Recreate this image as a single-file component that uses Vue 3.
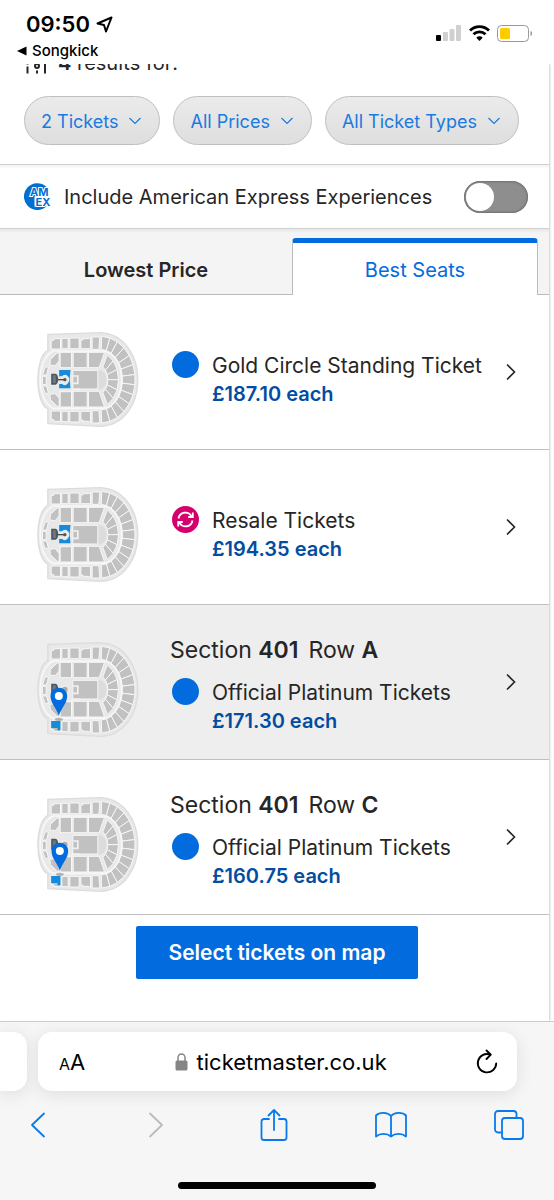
<template>
  <div class="phone">
    <header class="status">
      <div>
        <div class="status__time">
          <span>09:50</span>
          <svg width="17" height="17" viewBox="0 0 17 17" aria-hidden="true">
            <path d="M15.500 1.500 10 15.500 8 9 1.500 7.500Z" fill="none" stroke="#000" stroke-width="2" stroke-linejoin="round" />
          </svg>
        </div>
        <a class="status__back" href="#">
          <svg width="10" height="10" viewBox="0 0 10 10" aria-hidden="true">
            <path d="M0 5 9.500 0.500v9z" />
          </svg>
          Songkick
        </a>
      </div>
      <div class="status__icons">
        <svg width="26" height="16" viewBox="0 0 26 16" aria-hidden="true">
          <rect x="0" y="10" width="5" height="6" rx="1" />
          <g fill="#d0d0d0">
            <rect x="7" y="7" width="5" height="9" rx="1" />
            <rect x="13.500" y="4" width="5" height="12" rx="1" />
            <rect x="20" y="0" width="5" height="16" rx="1" />
          </g>
        </svg>
        <svg width="21" height="16" viewBox="0 0 21 16" aria-hidden="true">
          <path d="M1 5.500a13.500 13.500 0 0 1 19 0M4.500 9.300a8.500 8.500 0 0 1 12 0" fill="none" stroke="#000" stroke-width="2.800" />
          <path d="M10.500 16 7.300 12.700a4.500 4.500 0 0 1 6.400 0z" />
        </svg>
        <svg width="36" height="17" viewBox="0 0 36 17" aria-hidden="true">
          <rect x="0.500" y="0.500" width="31" height="16" rx="4" fill="#fff" stroke="#999" />
          <rect x="3" y="3" width="10" height="11" rx="1.500" fill="#fc0" />
          <path d="M33.500 6c2.200.6 2.200 4.400 0 5z" fill="#999" />
        </svg>
      </div>
    </header>

    <main class="page">
      <section class="filters">
        <div class="filters__summary">
          <svg width="24" height="24" viewBox="0 0 24 24" aria-hidden="true">
            <g fill="none" stroke="#262626" stroke-width="2">
              <path d="M2.500 0v14.500M2.500 16.500v7M12 0v13M12 20.500v3M20 0v12M20 14v9.500" />
              <circle cx="12" cy="16" r="2" />
            </g>
          </svg>
          <span><b>4</b> results for:</span>
        </div>
        <div class="filters__pills">
          <button v-for="label in filters" :key="label" class="pill" type="button">
            {{ label }}
            <svg width="12" height="8" viewBox="0 0 12 8" aria-hidden="true">
              <path d="M0.500 1 6 6.500 11.500 1" fill="none" stroke="currentColor" stroke-width="1.200" />
            </svg>
          </button>
        </div>
      </section>

      <section class="amex">
        <svg width="27" height="27" viewBox="0 0 27 27" aria-hidden="true">
          <path d="M22 3.500A13.300 13.300 0 1 0 22 23.500V12z" fill="#016fd0" />
          <path d="M10.500 13.500h13v11h-13z" fill="#fff" />
          <path d="M10.500 22.800h12.500A13.300 13.300 0 0 1 10.500 26.500z" fill="#016fd0" />
          <text x="6" y="12.500" class="amex__logo">AM</text>
          <text x="11.500" y="22.500" class="amex__logo">EX</text>
        </svg>
        <label class="amex__label" for="amex">Include American Express Experiences</label>
        <input id="amex" v-model="includeAmex" class="switch" type="checkbox" role="switch" />
      </section>

      <div class="tabs" role="tablist">
        <button
          v-for="tab in tabs"
          :key="tab"
          class="tab"
          :class="{ 'tab--active': tab === activeTab }"
          type="button"
          role="tab"
          :aria-selected="tab === activeTab"
          @click="activeTab = tab"
        >
          {{ tab }}
        </button>
      </div>

      <ul class="tickets">
        <li v-for="ticket in tickets" :key="ticket.id">
          <button class="ticket" :class="{ 'ticket--active': ticket.id === 3 }" type="button">
            <svg class="ticket__map" viewBox="50 35 305 285" aria-hidden="true">
              <path :d="outline" fill="#e8e8e8" stroke="#dcdcdc" stroke-width="4" />
              <path d="M98 92H248C322 100 322 256 248 264H98C46 240 46 116 98 92Z" fill="none" stroke="#f8f8f8" stroke-width="5" />
              <g fill="#c1c1c1" stroke="#f7f7f7" stroke-width="3">
                <path v-for="d in blocks" :key="d" :d="d" />
                <path v-for="d in wedges" :key="d" :d="d" />
              </g>
              <path d="M234 148Q258 152 258 178T234 208Z" fill="#dcdcdc" />
              <path d="M158 167h14v22h-14M115 213h40v-6h24" fill="none" stroke="#f2f2f2" stroke-width="5" />
              <path d="M92 160h13q8 2 8 17t-8 16H92z" fill="#4a5866" />
              <path d="M97 165h9v23h-9z" fill="#73777b" />
              <template v-if="!ticket.pin">
                <path d="M116 149h34q-5 28 0 55h-34v-13h9q9 9 17-2 7-12-1-22-8-8-16 1h-9z" fill="#168bdc" />
                <circle cx="133" cy="178" r="11" fill="none" stroke="#e6edf2" stroke-width="5" />
                <path d="M112 178h21" stroke="#4c4c4c" stroke-width="4" />
                <circle cx="133" cy="178" r="5" fill="#555" />
              </template>
              <template v-else>
                <circle cx="133" cy="178" r="11" fill="#aaa" stroke="#eee" stroke-width="5" />
                <path d="M92 272h28v28h-9v-7H92z" fill="#168bdc" />
                <ellipse :cx="ticket.pin" cy="267" rx="12" ry="5" fill="#888" opacity="0.6" />
                <path :d="pinPath(ticket.pin)" fill="#026cdf" />
                <circle :cx="ticket.pin" cy="197" r="12" fill="#fff" />
              </template>
            </svg>
            <span class="ticket__info" :class="{ 'ticket__info--seated': ticket.row }">
              <span v-if="ticket.row" class="ticket__seat">
                <span>Section <b>{{ ticket.section }}</b></span>
                <span>Row <b>{{ ticket.row }}</b></span>
              </span>
              <span class="ticket__offer">
                <svg width="27" height="27" viewBox="0 0 27 27" aria-hidden="true">
                  <circle cx="13.500" cy="13.500" r="13.500" :fill="ticket.resale ? '#d6006d' : '#026cdf'" />
                  <g v-if="ticket.resale" fill="none" stroke="#fff" stroke-width="1.800">
                    <path d="M6.500 12.500C7.500 6 16 4.500 19.500 10M20.500 14.500C19.500 21 11 22.500 7.500 17" />
                    <path d="M20.800 6.500V11h-4.600M6.200 20.500V16h4.600" />
                  </g>
                </svg>
                <span>
                  <span class="ticket__name">{{ ticket.name }}</span>
                  <span class="ticket__price">{{ ticket.price }} each</span>
                </span>
              </span>
            </span>
            <svg class="ticket__arrow" width="10" height="18" viewBox="0 0 10 18" aria-hidden="true">
              <path d="M1 1.500 8.500 9 1 16.500" fill="none" stroke="#262626" stroke-width="1.600" />
            </svg>
          </button>
        </li>
      </ul>

      <div class="action">
        <button class="action__button" type="button">Select tickets on map</button>
      </div>
    </main>

    <footer class="browser">
      <div class="browser__bars">
        <div class="browser__previous"></div>
        <div class="address">
          <button class="address__size" type="button" aria-label="Page settings"><small>A</small>A</button>
          <button class="address__url" type="button">
            <svg width="13" height="18" viewBox="0 0 13 18" aria-hidden="true">
              <path d="M3 8V4.500a3.500 3.500 0 0 1 7 0V8" fill="none" stroke="#858587" stroke-width="1.500" />
              <rect x="0.500" y="7.500" width="12" height="10" rx="1.500" fill="#858587" />
            </svg>
            ticketmaster.co.uk
          </button>
          <button type="button" aria-label="Reload">
            <svg width="22" height="26" viewBox="0 0 22 26" aria-hidden="true">
              <g fill="none" stroke="#000" stroke-width="1.900" stroke-linecap="round" stroke-linejoin="round">
                <path d="M14 5.500A9.200 9.200 0 1 0 20.200 14.500" />
                <path d="M10.500 1.500 14.800 5.700 10.500 10" />
              </g>
            </svg>
          </button>
        </div>
      </div>
      <nav class="toolbar">
        <button type="button" aria-label="Back">
          <svg width="16" height="26" viewBox="0 0 16 26"><path d="M14 1.500 2 13l12 11.500" /></svg>
        </button>
        <button type="button" aria-label="Forward" disabled>
          <svg width="16" height="26" viewBox="0 0 16 26"><path d="M2 1.500 14 13 2 24.500" /></svg>
        </button>
        <button type="button" aria-label="Share">
          <svg width="28" height="34" viewBox="0 0 28 34">
            <path d="M9 11H4a2.500 2.500 0 0 0-2.500 2.500v16A2.500 2.500 0 0 0 4 32h20a2.500 2.500 0 0 0 2.500-2.500v-16A2.500 2.500 0 0 0 24 11h-5M14 22V2M8.500 7.500 14 2l5.500 5.500" />
          </svg>
        </button>
        <button type="button" aria-label="Bookmarks">
          <svg width="34" height="28" viewBox="0 0 34 28">
            <path d="M17 5C13.500 1 5.500 1 2 4.500v21c4-3.500 11-3.500 15 0 4-3.500 11-3.500 15 0v-21C28.500 1 20.500 1 17 5zM17 5v20.500" />
          </svg>
        </button>
        <button type="button" aria-label="Tabs">
          <svg width="32" height="32" viewBox="0 0 32 32">
            <path d="M8 23.500H5A3 3 0 0 1 2 20.500V5a3 3 0 0 1 3-3h15.500a3 3 0 0 1 3 3v3.500" />
            <rect x="9" y="9" width="21" height="21" rx="3" />
          </svg>
        </button>
      </nav>
      <div class="home"></div>
    </footer>
  </div>
</template>

<script setup>
import { ref } from 'vue';

const filters = ['2 Tickets', 'All Prices', 'All Ticket Types'];
const tabs = ['Lowest Price', 'Best Seats'];
const activeTab = ref('Best Seats');
const includeAmex = ref(false);

const tickets = [
  { id: 1, name: 'Gold Circle Standing Ticket', price: '£187.10' },
  { id: 2, name: 'Resale Tickets', price: '£194.35', resale: true },
  { id: 3, name: 'Official Platinum Tickets', price: '£171.30', section: '401', row: 'A', pin: 115 },
  { id: 4, name: 'Official Platinum Tickets', price: '£160.75', section: '401', row: 'C', pin: 118 },
];

const outline =
  'M82 42 240 37C310 40 352 105 352 178S310 316 240 318L82 310V266C42 246 42 110 82 90Z';

// straight seating blocks and the floor
const blocks = [
  'M92 60h8v-5h20v31H92z',
  'M124 54h19v31h-19z',
  'M148 53h28v32h-28z',
  'M181 59h6v-4h18v-2h5v32h-29z',
  'M215 50h23l-3 37h-20z',
  'M92 298h8v5h20v-31H92z',
  'M124 304h19v-31h-19z',
  'M148 305h28v-32h-28z',
  'M181 299h6v4h18v2h5v-32h-29z',
  'M215 308h23l-3-37h-20z',
  'M119 96h34v46h-34z',
  'M158 96h42v46h-42z',
  'M204 96h48l-16 46h-32z',
  'M119 213h34v47h-34z',
  'M158 213h42v47h-42z',
  'M204 213h32l16 47h-48z',
  'M157 150h75v56h-75z',
  'M90 117 110 98h6v24l-12 14-16-2z',
  'M90 238 110 258h6v-24l-12-14-16 2z',
  'M74 140h10l-6 24H66z',
  'M66 168h11v25H66z',
  'M66 197h12l6 22H74z',
];

// one slice of a ring of seats, angles in degrees
const slice = (cx, inner, outer, from, to) => {
  const point = ([rx, ry], angle) => {
    const rad = (angle * Math.PI) / 180;
    return `${(cx + rx * Math.cos(rad)).toFixed(1)} ${(178 + ry * Math.sin(rad)).toFixed(1)}`;
  };
  return `M${point(inner, from)}L${point(outer, from)} ${point(outer, to)} ${point(inner, to)}Z`;
};

const ring = (cx, inner, outer, start, count) => {
  const step = (-2 * start) / count;
  return Array.from({ length: count }, (_, i) =>
    slice(cx, inner, outer, start + i * step, start + (i + 1) * step),
  );
};

const wedges = [
  ...ring(240, [66, 91], [104, 130], -88, 13),
  ...ring(236, [26, 42], [58, 82], -65, 6),
];

const pinPath = (x) => `M${x} 256C${x - 8} 232 ${x - 25} 218 ${x - 25} 197a25 25 0 0 1 50 0C${x + 25} 218 ${x + 8} 232 ${x} 256Z`;
</script>

<style>
body {
  margin: 0;
}
</style>

<style scoped>
.phone {
  display: flex;
  flex-direction: column;
  min-height: 100vh;
  background-color: #fff;
  color: #262626;
  font-family: Inter, sans-serif;
  font-size: 20px;
}

button {
  border: 0;
  padding: 0;
  background: none;
  color: inherit;
  font: inherit;
}

svg {
  display: block;
  flex: none;
}

b {
  font-weight: 600;
}

.status {
  display: flex;
  justify-content: space-between;
  box-sizing: border-box;
  height: 64px;
  padding: 10px 21px 0 26px;
  color: #000;
}

.status__time {
  display: flex;
  align-items: center;
  gap: 6px;
  font-size: 22px;
  font-weight: 600;
  line-height: 28px;
}

.status__back {
  display: flex;
  align-items: center;
  gap: 5px;
  margin-left: -9px;
  color: #000;
  font-size: 15px;
  font-weight: 500;
  line-height: 26px;
  text-decoration: none;
}

.status__icons {
  display: flex;
  align-items: center;
  gap: 7px;
  height: 46px;
}

.page {
  margin-right: 5px;
  box-shadow: 1px 0 2px #ccc;
  clip-path: inset(0 -5px 0 0);
}

.filters {
  padding-bottom: 19px;
  border-bottom: 1px solid #d0d0d0;
}

/* the summary line has scrolled under the status bar */
.filters__summary {
  display: flex;
  align-items: flex-end;
  gap: 9px;
  overflow: hidden;
  height: 10px;
  padding-left: 25px;
  line-height: 22px;
}

.filters__pills {
  display: flex;
  gap: 13px;
  padding: 22px 24px 0;
}

.pill {
  display: flex;
  align-items: center;
  gap: 11px;
  height: 49px;
  padding: 1px 18px 0 16px;
  border: 1px solid #bfbfbf;
  border-radius: 25px;
  background: linear-gradient(#ebebeb, #dedede);
  color: #1a7ae0;
  font-size: 18px;
  white-space: nowrap;
}

.amex {
  display: flex;
  align-items: center;
  height: 63px;
  padding: 0 21px 0 24px;
  border-bottom: 1px solid #d0d0d0;
  background: linear-gradient(#f2f2f2, #fff 4px);
}

.amex__logo {
  fill: #016fd0;
  stroke: #fff;
  stroke-width: 2px;
  paint-order: stroke;
  font-size: 11px;
  font-weight: 700;
}

.amex__label {
  flex: 1;
  margin-left: 13px;
}

.switch {
  appearance: none;
  box-sizing: border-box;
  width: 64px;
  height: 32px;
  margin: 0;
  padding: 2px;
  border-radius: 16px;
  background-color: #8e8e8e;
  box-shadow: inset 0 0 2px 1px #707070;
}

.switch::before {
  content: '';
  display: block;
  width: 28px;
  height: 28px;
  border-radius: 50%;
  background-color: #fff;
}

.switch:checked::before {
  margin-left: auto;
}

.tabs {
  display: grid;
  grid-template-columns: 292fr 246fr;
  padding: 9px 11px 0 0;
  background:
    linear-gradient(#bbb, #bbb) bottom / 100% 1px no-repeat,
    linear-gradient(#e6e6e6, #f4f4f4 4px);
}

.tab {
  height: 57px;
  padding-top: 6px;
  font-weight: 600;
}

.tab--active {
  border: 1px solid #bbb;
  border-width: 0 1px;
  border-top: 5px solid #026cdf;
  border-radius: 4px 4px 0 0;
  padding-top: 1px;
  background-color: #fff;
  color: #026cdf;
  font-weight: 400;
}

.tickets {
  margin: 0;
  padding: 0;
  list-style: none;
}

.ticket {
  display: flex;
  align-items: center;
  box-sizing: border-box;
  width: 100%;
  height: 155px;
  padding: 0 33px 0 37px;
  border-bottom: 1px solid #bfbfbf;
  text-align: left;
}

.ticket--active {
  background-color: #eee;
}

.ticket__map {
  width: 102px;
  height: 95px;
  margin-top: 15px;
}

.ticket__info {
  flex: 1;
  margin-top: 15px;
  margin-left: 31px;
}

.ticket__info--seated {
  margin-top: 7px;
}

.ticket__seat {
  display: flex;
  gap: 10px;
  margin-bottom: 14px;
  font-size: 23px;
  line-height: 28px;
}

.ticket__offer {
  display: flex;
  gap: 13px;
  padding-left: 2px;
  line-height: 29px;
}

.ticket__name,
.ticket__price {
  display: block;
  white-space: nowrap;
}

.ticket__name {
  font-size: 21px;
}

.ticket__price {
  color: #024da1;
  font-weight: 600;
}

.action {
  display: flex;
  justify-content: center;
  padding: 11px 0 42px 5px;
}

.action__button {
  padding: 0 32px;
  border-radius: 2px;
  background-color: #026cdf;
  color: #fff;
  font-size: 21px;
  font-weight: 600;
  line-height: 53px;
}

.browser {
  margin-top: auto;
  padding-bottom: 11px;
  border-top: 1px solid #ccc;
  background-color: #f6f6f6;
  color: #000;
}

.browser__bars {
  display: flex;
  gap: 11px;
  padding: 10px 37px 17px 0;
}

.browser__previous {
  width: 27px;
  border-radius: 0 14px 14px 0;
  background-color: #fff;
  box-shadow: 0 3px 16px #ddd;
}

.address {
  display: flex;
  flex: 1;
  align-items: center;
  justify-content: space-between;
  height: 59px;
  padding: 0 19px 0 21px;
  border-radius: 14px;
  background-color: #fff;
  box-shadow: 0 3px 16px #ddd;
}

.address__size {
  font-size: 22px;
}

.address__size small {
  font-size: 16px;
}

.address__url {
  display: flex;
  align-items: center;
  gap: 9px;
  font-size: 22px;
}

.toolbar {
  display: flex;
  align-items: center;
  justify-content: space-between;
  height: 34px;
  padding: 0 28px 0 21px;
}

.toolbar button {
  display: flex;
  justify-content: center;
  width: 34px;
}

.toolbar svg {
  fill: none;
  stroke: #087aea;
  stroke-width: 1.800px;
  stroke-linecap: round;
  stroke-linejoin: round;
}

.toolbar button:disabled svg {
  stroke: #bbb;
}

.home {
  width: 198px;
  height: 7px;
  margin: 40px auto 0;
  border-radius: 4px;
  background-color: #000;
}
</style>
